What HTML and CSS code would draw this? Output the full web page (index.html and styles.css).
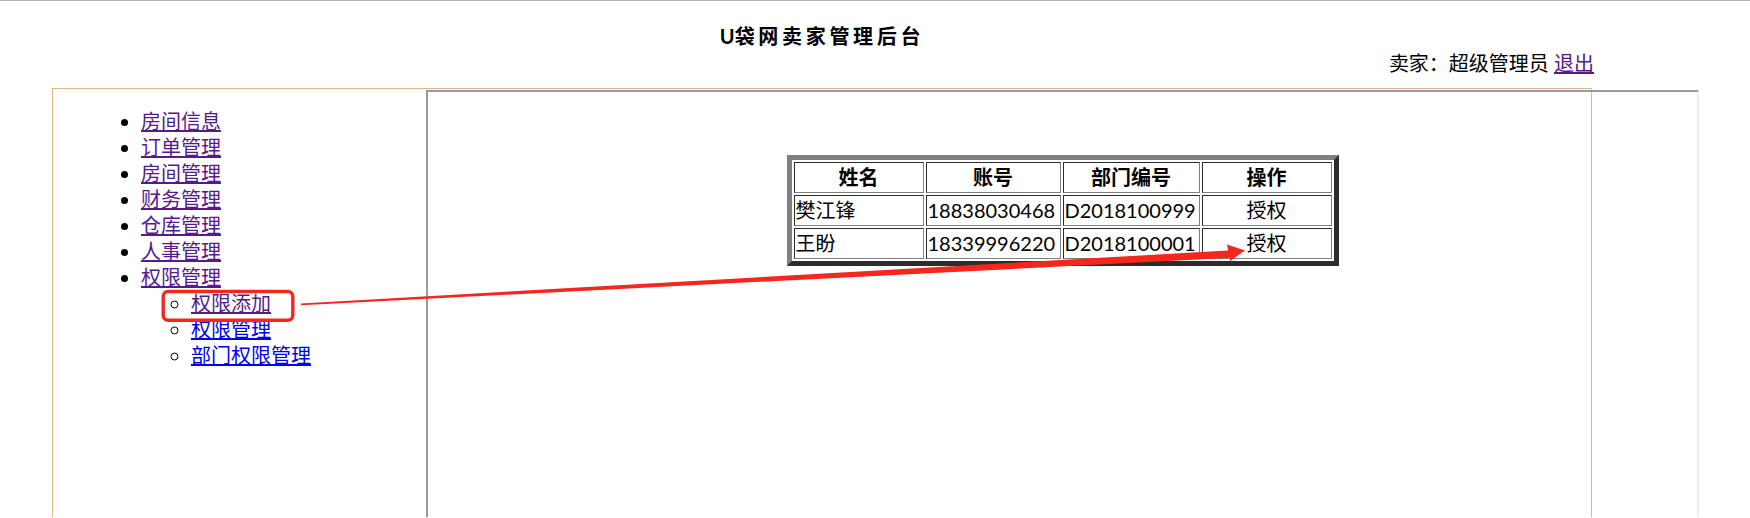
FILE: index.html
```html
<!DOCTYPE html>
<html lang="zh-CN">
<head>
<meta charset="utf-8">
<title>U袋网卖家管理后台</title>
<link rel="stylesheet" href="styles.css">
</head>
<body>
<div class="page">
  <header class="top">
    <h1 class="title"><span class="u">U</span>袋网卖家管理后台</h1>
    <div class="user">卖家：超级管理员 <a href="#" class="visited">退出</a></div>
  </header>
  <div class="main">
    <nav class="side">
      <ul class="menu">
        <li><a class="visited" href="#">房间信息</a></li>
        <li><a class="visited" href="#">订单管理</a></li>
        <li><a class="visited" href="#">房间管理</a></li>
        <li><a class="visited" href="#">财务管理</a></li>
        <li><a class="visited" href="#">仓库管理</a></li>
        <li><a class="visited" href="#">人事管理</a></li>
        <li><a class="visited" href="#">权限管理</a>
          <ul class="sub">
            <li><a class="visited" href="#">权限添加</a></li>
            <li><a href="#">权限管理</a></li>
            <li><a href="#">部门权限管理</a></li>
          </ul>
        </li>
      </ul>
    </nav>
    <div class="frame">
      <table class="grid">
        <tr>
          <th class="c1">姓名</th>
          <th class="c2">账号</th>
          <th class="c3">部门编号</th>
          <th class="c4">操作</th>
        </tr>
        <tr>
          <td>樊江锋</td>
          <td>18838030468</td>
          <td>D2018100999</td>
          <td class="act">授权</td>
        </tr>
        <tr>
          <td>王盼</td>
          <td>18339996220</td>
          <td>D2018100001</td>
          <td class="act">授权</td>
        </tr>
      </table>
    </div>
  </div>
</div>
<svg class="annot" width="1750" height="518" viewBox="0 0 1750 518">
  <rect x="163.2" y="291.5" width="129.6" height="28.7" rx="5" ry="5" fill="none" stroke="#f5261e" stroke-width="3.4"/>
  <polygon points="301,303.4 1231.8,250.3 1232.2,257.7 301,305.2" fill="#f5261e"/>
  <polygon points="1227,244.5 1245,250.5 1230,261" fill="#f5261e"/>
</svg>
</body>
</html>
```

FILE: styles.css
```css
html {
  border-top: 1px solid #b5b5b5;
  overflow: hidden;
}

body {
  margin: 0;
  font-family: Lato, "Noto Sans CJK SC", sans-serif;
  font-size: 20px;
  line-height: 26px;
  color: #000;
  background: #fff;
}

a {
  color: #0000ee;
  text-decoration: underline;
}

a.visited {
  color: #551a8b;
}

.page {
  margin-left: 52px;
  width: 1540px;
}

.top {
  padding-top: 22px;
}

.title {
  margin: 0;
  font-size: 20px;
  line-height: 27px;
  font-weight: 700;
  letter-spacing: 3.7px;
  text-align: center;
}

.title .u {
  letter-spacing: 0;
}

.user {
  text-align: right;
  margin-right: -2px;
  line-height: 26px;
}

.main {
  margin-top: 12px;
  width: 1540px;
  height: 429px;
  box-sizing: border-box;
  border: 1px solid #deb887;
  border-bottom: none;
  display: flex;
  align-items: flex-start;
}

.side {
  flex: none;
  width: 373px;
}

.menu {
  margin: 19px 0 0;
  padding-left: 88px;
  list-style: disc;
}

.sub {
  margin: 0;
  padding-left: 50px;
  list-style: circle;
}

.frame {
  flex: none;
  width: 1273px;
  height: 427px;
  margin-top: 1px;
  box-sizing: border-box;
  border: 2px solid;
  border-color: #9a9a9a #eeeeee #eeeeee #9a9a9a;
  border-bottom: none;
  padding-top: 63px;
}

.grid {
  margin: 0 auto;
  border: 5px outset gray;
  border-spacing: 2px;
}

.grid th,
.grid td {
  border: 1px inset gray;
  padding: 1px;
  line-height: 27px;
  box-sizing: border-box;
  text-align: left;
  font-weight: 400;
}

.grid th {
  text-align: center;
  font-weight: 700;
}

.grid .act {
  text-align: center;
}

.c1 { width: 130px; }
.c2 { width: 135px; }
.c3 { width: 137px; }
.c4 { width: 130px; }

.annot {
  position: absolute;
  left: 0;
  top: 0;
  pointer-events: none;
}
```
